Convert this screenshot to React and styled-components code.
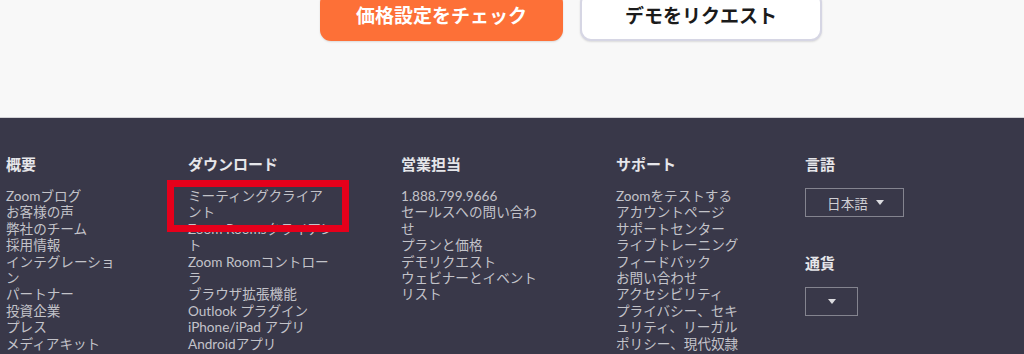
import React from "react";
import styled, { createGlobalStyle } from "styled-components";

const Global = createGlobalStyle`
  html, body { margin: 0; padding: 0; }
  body {
    width: 1024px;
    height: 354px;
    overflow: hidden;
    background: #393849;
    font-family: Lato, "Noto Sans CJK JP", sans-serif;
  }
`;

const Page = styled.div`
  width: 1024px;
  height: 354px;
  display: flex;
  flex-direction: column;
  overflow: hidden;
`;

const Hero = styled.section`
  height: 117px;
  flex: none;
  background: #f8f8f8;
  display: flex;
  align-items: flex-start;
  gap: 17px;
  padding-left: 320px;
  border-bottom: 1px solid #d2d2d6;
`;

const CtaButton = styled.button`
  margin-top: -8px;
  height: 49px;
  width: ${(p) => (p.$primary ? "243px" : "242px")};
  border-radius: 11px;
  border: ${(p) => (p.$primary ? "none" : "2px solid #d6d6e4")};
  background: ${(p) => (p.$primary ? "#fd7037" : "#ffffff")};
  color: ${(p) => (p.$primary ? "#ffffff" : "#1b1b1b")};
  font-family: Lato, "Noto Sans CJK JP", sans-serif;
  font-weight: 700;
  font-size: 19px;
  padding: 0 0 5px;
  box-shadow: 0 1px 2px rgba(0, 0, 0, 0.12);
  cursor: pointer;
`;

const Footer = styled.footer`
  position: relative;
  flex: 1;
  background: #393849;
  display: grid;
  grid-template-columns: 182px 213px 215px 189px 1fr;
  padding: 36px 0 0 6px;
  align-items: start;
`;

const Column = styled.div`
  display: flex;
  flex-direction: column;
  max-width: ${(p) => p.$w}px;
`;

const Heading = styled.h3`
  margin: 0 0 14px;
  font-size: 15px;
  line-height: 20px;
  font-weight: 700;
  color: #e6e6ea;
`;

const LinkItem = styled.a`
  display: block;
  font-size: 13.6px;
  line-height: 16.4px;
  color: #c3c3c9;
  text-decoration: none;
`;

const Select = styled.div`
  box-sizing: border-box;
  width: ${(p) => p.$w}px;
  height: 29px;
  border: 1.5px solid #84848f;
  display: flex;
  align-items: center;
  justify-content: center;
  gap: 8px;
  font-size: 13.6px;
  color: #cfcfd4;
  margin-bottom: ${(p) => p.$mb || 0}px;
  padding-left: ${(p) => p.$pl || 0}px;
`;

const Caret = styled.span`
  width: 0;
  height: 0;
  border-left: 4.5px solid transparent;
  border-right: 4.5px solid transparent;
  border-top: 5px solid #dcdce0;
`;

const Highlight = styled.div`
  position: absolute;
  left: 167px;
  top: 62px;
  width: 182px;
  height: 52px;
  box-sizing: border-box;
  border: 7px solid #e5001b;
  pointer-events: none;
`;

const columns = [
  {
    title: "概要",
    w: 118,
    links: [
      "Zoomブログ",
      "お客様の声",
      "弊社のチーム",
      "採用情報",
      "インテグレーション",
      "パートナー",
      "投資企業",
      "プレス",
      "メディアキット",
    ],
  },
  {
    title: "ダウンロード",
    w: 146,
    links: [
      "ミーティングクライアント",
      "Zoom Roomsクライアント",
      "Zoom Roomコントローラ",
      "ブラウザ拡張機能",
      "Outlook プラグイン",
      "iPhone/iPad アプリ",
      "Androidアプリ",
    ],
  },
  {
    title: "営業担当",
    w: 146,
    links: [
      "1.888.799.9666",
      "セールスへの問い合わせ",
      "プランと価格",
      "デモリクエスト",
      "ウェビナーとイベントリスト",
    ],
  },
  {
    title: "サポート",
    w: 130,
    links: [
      "Zoomをテストする",
      "アカウントページ",
      "サポートセンター",
      "ライブトレーニング",
      "フィードバック",
      "お問い合わせ",
      "アクセシビリティ",
      "プライバシー、セキュリティ、リーガルポリシー、現代奴隷",
    ],
  },
];

export default function App() {
  return (
    <Page>
      <Global />
      <Hero>
        <CtaButton $primary>価格設定をチェック</CtaButton>
        <CtaButton>デモをリクエスト</CtaButton>
      </Hero>
      <Footer>
        {columns.map((c) => (
          <Column key={c.title} $w={c.w}>
            <Heading>{c.title}</Heading>
            {c.links.map((l) => (
              <LinkItem key={l} href="#">
                {l}
              </LinkItem>
            ))}
          </Column>
        ))}
        <Column $w={200}>
          <Heading>言語</Heading>
          <Select $w={99} $mb={36} $pl={2}>
            日本語 <Caret />
          </Select>
          <Heading>通貨</Heading>
          <Select $w={53}>
            <Caret />
          </Select>
        </Column>
        <Highlight />
      </Footer>
    </Page>
  );
}
